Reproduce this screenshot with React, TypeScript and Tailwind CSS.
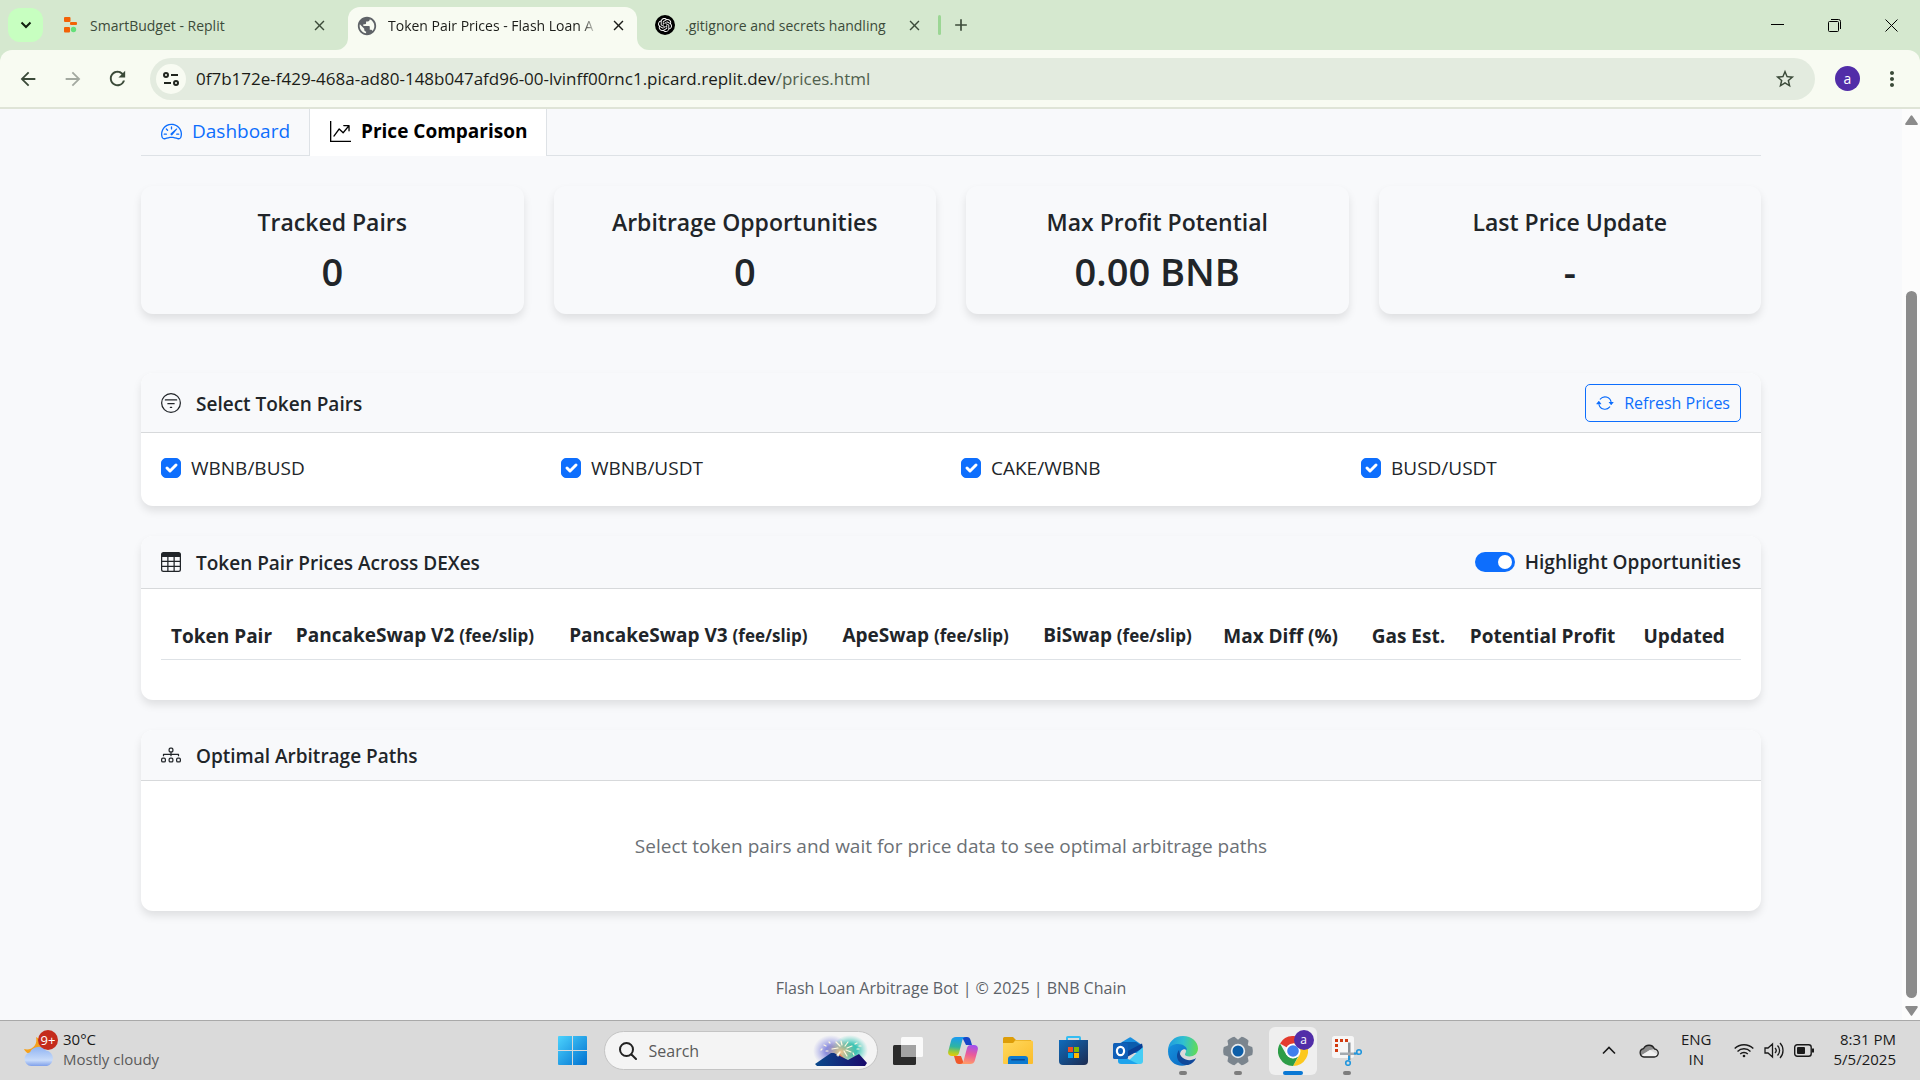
import React, { useState } from "react";
import {
  BsSpeedometer2,
  BsGraphUpArrow,
  BsFilterCircle,
  BsTable,
  BsDiagram3,
  BsArrowRepeat,
} from "react-icons/bs";
import { SiOpenai } from "react-icons/si";
import {
  MdArrowBack,
  MdArrowForward,
  MdRefresh,
  MdStarBorder,
  MdMoreVert,
  MdPublic,
  MdClose,
  MdAdd,
} from "react-icons/md";

const FONT = "font-['Open_Sans','Noto_Sans',sans-serif]";

function TabStrip() {
  return (
    <div className="flex h-[50px] items-stretch bg-[#d5e8cf] text-[14px] text-[#3c4b3a]">
      <div className="flex w-[348px] items-center pl-2 pr-5">
        <button
          aria-label="Search tabs"
          className="flex h-[34px] w-[35px] items-center justify-center rounded-xl bg-[#c7ffc0] text-[#10200e]"
        >
          <svg viewBox="0 0 12 8" className="h-2 w-3" fill="none" stroke="currentColor" strokeWidth="2">
            <path d="M1.5 1.5 6 6l4.500-4.500" />
          </svg>
        </button>
        <svg viewBox="0 0 13 16" className="ml-[21px] h-4 w-[13px]">
          <rect width="6.500" height="5" rx="1" fill="#f26207" />
          <rect x="6" y="5" width="7" height="3" rx="1" fill="#f26207" />
          <rect y="10" width="6" height="5.500" rx="1" fill="#f26207" />
          <circle cx="9.500" cy="12.500" r="2.700" fill="#64e07a" />
        </svg>
        <span className="ml-[13px] grow">SmartBudget - Replit</span>
        <button aria-label="Close SmartBudget tab">
          <MdClose className="size-[17px]" />
        </button>
      </div>
      <div className="flex w-[289px] items-end">
        <div className="relative flex h-[43px] w-full items-center rounded-t-xl bg-[#f8fbf2] pb-1.5 pl-2 pr-2.5 text-[#1b1c18]">
          <svg viewBox="0 0 12 12" className="absolute -left-3 bottom-0 size-3" fill="#f8fbf2">
            <path d="M12 0v12H0A12 12 0 0 0 12 0z" />
          </svg>
          <svg viewBox="0 0 12 12" className="absolute -right-3 bottom-0 size-3" fill="#f8fbf2">
            <path d="M0 0v12h12A12 12 0 0 1 0 0z" />
          </svg>
          <MdPublic className="size-[22px] shrink-0 text-[#5f6368]" />
          <span className="ml-2.5 w-[209px] overflow-hidden whitespace-nowrap [mask-image:linear-gradient(to_right,black_93%,transparent)]">
            Token Pair Prices - Flash Loan A
          </span>
          <button aria-label="Close Token Pair Prices tab" className="ml-auto">
            <MdClose className="size-[17px]" />
          </button>
        </div>
      </div>
      <div className="flex items-center pl-[18px]">
        <span className="flex size-5 items-center justify-center rounded-full bg-black text-white">
          <SiOpenai className="size-3.5" />
        </span>
        <span className="ml-2.5 w-[221px] whitespace-nowrap">.gitignore and secrets handling</span>
        <button aria-label="Close gitignore tab">
          <MdClose className="size-[17px]" />
        </button>
        <span className="ml-[15px] h-5 w-[3px] rounded bg-[#9bd694]" />
        <button aria-label="New tab" className="ml-2.5">
          <MdAdd className="size-5" />
        </button>
      </div>
      <div className="ml-auto flex items-center gap-11 pr-[22px] text-black">
        <button aria-label="Minimize">
          <svg viewBox="0 0 13 13" className="size-[13px]" stroke="currentColor">
            <path d="M0 5.500h13" />
          </svg>
        </button>
        <button aria-label="Restore">
          <svg viewBox="0 0 13 13" className="size-[13px]" fill="none" stroke="currentColor">
            <path d="M3 .5h7.500a2 2 0 0 1 2 2V10" />
            <rect x=".5" y="2.500" width="10" height="10" rx="1" />
          </svg>
        </button>
        <button aria-label="Close window">
          <svg viewBox="0 0 13 13" className="size-[13px]" stroke="currentColor">
            <path d="m.5.5 12 12m0-12-12 12" />
          </svg>
        </button>
      </div>
    </div>
  );
}

function Toolbar() {
  return (
    <div className="bg-[#d5e8cf]">
      <div className="flex h-[59px] items-center rounded-t-xl border-b-2 border-[#dfe4d7] bg-[#f8fbf2] pl-[17px] pr-4 text-[#3b4a39]">
        <button aria-label="Back">
          <MdArrowBack className="size-[22px]" />
        </button>
        <button aria-label="Forward" className="ml-[23px] text-[#a3a9a0]">
          <MdArrowForward className="size-[22px]" />
        </button>
        <button aria-label="Reload" className="ml-[22px]">
          <MdRefresh className="size-[23px]" />
        </button>
        <div className="ml-[21px] flex h-[42px] grow items-center rounded-full bg-[#e3ebdf] pl-1.5 pr-[19px]">
          <button
            aria-label="Site information"
            className="flex size-[30px] items-center justify-center rounded-full bg-[#f8fbf2] text-[#20251e]"
          >
            <svg viewBox="0 0 16 14" className="h-3.5 w-4" fill="none" stroke="currentColor" strokeWidth="2">
              <circle cx="3" cy="3" r="2" />
              <path d="M8 3h7M1 11h7" />
              <circle cx="13" cy="11" r="2" />
            </svg>
          </button>
          <span className="ml-2.5 grow text-[17px] text-[#1b1c18]">
            0f7b172e-f429-468a-ad80-148b047afd96-00-lvinff00rnc1.picard.replit.dev
            <span className="text-[#50604d]">/prices.html</span>
          </span>
          <button aria-label="Bookmark">
            <MdStarBorder className="size-[22px]" />
          </button>
        </div>
        <button
          aria-label="Profile"
          className="ml-5 flex size-[25px] items-center justify-center rounded-full bg-[#512da8] text-sm text-white"
        >
          a
        </button>
        <button aria-label="Menu" className="ml-5">
          <MdMoreVert className="size-6" />
        </button>
      </div>
    </div>
  );
}

const STATS = [
  ["Tracked Pairs", "0"],
  ["Arbitrage Opportunities", "0"],
  ["Max Profit Potential", "0.00 BNB"],
  ["Last Price Update", "-"],
];

const PAIRS = ["WBNB/BUSD", "WBNB/USDT", "CAKE/WBNB", "BUSD/USDT"];

const CARD = "overflow-hidden rounded-xl shadow-[0_5px_8px_rgba(0,0,0,0.1)]";
const CARD_HEADER = "flex items-center border-b border-[#d7d9db] bg-[#f8f9fb] px-5";
const CARD_TITLE = "ml-[15px] grow pt-0.5 font-semibold";

function PairCheckbox({ label }: { label: string }) {
  const [on, setOn] = useState(true);
  return (
    <label className="flex items-center gap-2.5">
      <span className="relative flex size-5">
        <input
          type="checkbox"
          checked={on}
          onChange={() => setOn(!on)}
          className="size-5 appearance-none rounded-[5px] border border-[#dee2e6] bg-white checked:border-[#0d6efd] checked:bg-[#0d6efd]"
        />
        {on && (
          <svg
            viewBox="0 0 20 20"
            className="pointer-events-none absolute inset-0 size-5"
            fill="none"
            stroke="white"
            strokeWidth="3"
            strokeLinecap="round"
            strokeLinejoin="round"
          >
            <path d="m6 10 3 3 6-6" />
          </svg>
        )}
      </span>
      {label}
    </label>
  );
}

function PriceTable() {
  const fee = <small className="text-[17px]">(fee/slip)</small>;
  return (
    <table className="w-full table-fixed text-left">
      <thead className="whitespace-nowrap">
        <tr className="border-b border-[#dee2e6] [&>th]:px-2.5 [&>th]:pt-[11px] [&>th]:pb-2 [&>th]:text-[19px] [&>th]:leading-[30px] [&>th]:font-bold">
          <th className="w-[7.9%]">Token Pair</th>
          <th className="w-[17.3%]">PancakeSwap V2 {fee}</th>
          <th className="w-[17.3%]">PancakeSwap V3 {fee}</th>
          <th className="w-[12.7%]">ApeSwap {fee}</th>
          <th className="w-[11.4%]">BiSwap {fee}</th>
          <th className="w-[9.4%]">Max Diff (%)</th>
          <th className="w-[6.2%]">Gas Est.</th>
          <th className="w-[11%]">Potential Profit</th>
          <th>Updated</th>
        </tr>
      </thead>
      <tbody />
    </table>
  );
}

function Page() {
  const [highlight, setHighlight] = useState(true);
  return (
    <div className="flex grow bg-[#f8f9fb] text-[#212529]">
      <main className="flex min-w-0 grow flex-col px-[141px] text-[19px] leading-[30px]">
        <nav className="flex h-[47px] border-b border-[#dee2e6]">
          <a href="#dashboard" className="flex w-[168px] items-center gap-2.5 pb-0.5 pl-5 text-[#0d6efd]">
            <BsSpeedometer2 className="size-[21px]" />
            Dashboard
          </a>
          <a
            href="#prices"
            className="-mb-px flex w-[238px] items-center gap-2.5 border-x border-[#dee2e6] bg-white pb-[3px] pl-5 font-bold text-black"
          >
            <BsGraphUpArrow className="size-[21px]" />
            Price Comparison
          </a>
        </nav>

        <section className="mt-[30px] grid grid-cols-4 gap-[30px] text-center">
          {STATS.map(([title, value]) => (
            <div key={title} className={`${CARD} px-5 pt-[21px] pb-[19px]`}>
              <h2 className="mb-2.5 text-[23px] leading-[30px] font-semibold">{title}</h2>
              <p className="text-[38px] leading-[48px] font-semibold">{value}</p>
            </div>
          ))}
        </section>

        <section className={`${CARD} mt-[59px] bg-white`}>
          <div className={`${CARD_HEADER} h-[60px]`}>
            <BsFilterCircle className="size-5" />
            <h3 className={CARD_TITLE}>Select Token Pairs</h3>
            <button className="flex h-[38px] items-center gap-2.5 rounded-[5px] border border-[#0d6efd] px-2.5 text-[16px] text-[#0d6efd]">
              <BsArrowRepeat className="size-[18px]" />
              Refresh Prices
            </button>
          </div>
          <div className="grid grid-cols-4 pt-5 pb-[23px] pl-5">
            {PAIRS.map((p) => (
              <PairCheckbox key={p} label={p} />
            ))}
          </div>
        </section>

        <section className={`${CARD} mt-[30px] bg-white`}>
          <div className={`${CARD_HEADER} h-[53px]`}>
            <BsTable className="size-5" />
            <h3 className={CARD_TITLE}>Token Pair Prices Across DEXes</h3>
            <label className="flex items-center gap-2.5 font-semibold">
              <input
                type="checkbox"
                role="switch"
                checked={highlight}
                onChange={() => setHighlight(!highlight)}
                className="flex h-5 w-10 appearance-none items-center rounded-full bg-gray-300 px-[3px] before:size-3.5 before:rounded-full before:bg-white checked:justify-end checked:bg-[#0d6efd]"
              />
              Highlight Opportunities
            </label>
          </div>
          <div className="px-5 pt-5 pb-10">
            <PriceTable />
          </div>
        </section>

        <section className={`${CARD} mt-[30px] bg-white`}>
          <div className={`${CARD_HEADER} h-[51px]`}>
            <BsDiagram3 className="size-5" />
            <h3 className={CARD_TITLE}>Optimal Arbitrage Paths</h3>
          </div>
          <p className="py-[50px] text-center text-[#6b7075]">
            Select token pairs and wait for price data to see optimal arbitrage paths
          </p>
        </section>

        <footer className="mt-[62px] text-center text-[16px] text-[#5c6268]">
          Flash Loan Arbitrage Bot | © 2025 | BNB Chain
        </footer>
      </main>
      <div className="flex w-[18px] shrink-0 flex-col items-center bg-[#fcfcfc] pt-1.5 pb-1">
        <svg viewBox="0 0 13 10" className="h-2.5 w-[13px]" fill="#8b8b8b">
          <path d="M5.700.8a1 1 0 0 1 1.600 0l5.200 7.500a1 1 0 0 1-.8 1.700H1.300a1 1 0 0 1-.8-1.700z" />
        </svg>
        <div className="grow-[166]" />
        <div className="w-[11px] grow-[707] rounded-full bg-[#8b8b8b]" />
        <svg viewBox="0 0 13 10" className="mt-2 h-2.5 w-[13px] rotate-180" fill="#8b8b8b">
          <path d="M5.700.8a1 1 0 0 1 1.600 0l5.200 7.500a1 1 0 0 1-.8 1.700H1.300a1 1 0 0 1-.8-1.700z" />
        </svg>
      </div>
    </div>
  );
}

function Weather() {
  return (
    <button className="flex items-center gap-2 text-left text-[15px] leading-5">
      <span className="relative block h-[38px] w-[31px]">
        <svg viewBox="0 0 31 38" className="absolute inset-0">
          <defs>
            <linearGradient id="cloud" x1="0" y1="0" x2="0" y2="1">
              <stop offset="0" stopColor="#8fb3f2" />
              <stop offset=".7" stopColor="#c9dcfa" />
              <stop offset="1" stopColor="#7fa0ea" />
            </linearGradient>
          </defs>
          <path d="M12 7c2 8-4 14-12 12 2 4 7 7 12 5 6-2 8-9 5-14z" fill="#f5a11c" />
          <path
            d="M7 36a7 7 0 0 1-1-13.800A9.500 9.500 0 0 1 22 20.500 7.900 7.900 0 0 1 23 36z"
            fill="url(#cloud)"
          />
        </svg>
        <span className="absolute top-0 left-3.5 flex size-5 items-center justify-center rounded-full bg-[#c42b1c] text-[13px] text-white">
          9+
        </span>
      </span>
      <span>
        <span className="block text-[#1a1a1a]">30°C</span>
        <span className="block text-[#5b5b5b]">Mostly cloudy</span>
      </span>
    </button>
  );
}

function StartIcon() {
  return (
    <svg viewBox="0 0 29 29" className="size-[29px]">
      <defs>
        <linearGradient id="win" x1="0" y1="0" x2="1" y2="1">
          <stop offset="0" stopColor="#4cd3fd" />
          <stop offset="1" stopColor="#0070d0" />
        </linearGradient>
      </defs>
      <path
        d="M1 0h13v14H0V1a1 1 0 0 1 1-1zm14 0h13a1 1 0 0 1 1 1v13H15zM0 15h14v14H1a1 1 0 0 1-1-1zm15 0h14v13a1 1 0 0 1-1 1H15z"
        fill="url(#win)"
      />
    </svg>
  );
}

function SearchArt() {
  return (
    <svg viewBox="0 0 56 31" className="h-[31px] w-14">
      <defs>
        <radialGradient id="sa1">
          <stop offset=".3" stopColor="#6f73d8" stopOpacity=".8" />
          <stop offset="1" stopColor="#8d90e6" stopOpacity="0" />
        </radialGradient>
        <radialGradient id="sa2">
          <stop offset=".4" stopColor="#2bbfae" stopOpacity=".9" />
          <stop offset="1" stopColor="#4fd0c0" stopOpacity="0" />
        </radialGradient>
        <radialGradient id="sa3">
          <stop offset="0" stopColor="#f6c38c" />
          <stop offset="1" stopColor="#c0a878" stopOpacity="0" />
        </radialGradient>
        <linearGradient id="sa4" x1="0" y1="0" x2="1" y2="0">
          <stop offset="0" stopColor="#0b4a8c" />
          <stop offset="1" stopColor="#1a0a6c" />
        </linearGradient>
      </defs>
      <ellipse cx="18" cy="16" rx="18" ry="16" fill="url(#sa1)" />
      <ellipse cx="37" cy="15" rx="18" ry="15" fill="url(#sa2)" />
      <ellipse cx="28" cy="17" rx="15" ry="12" fill="url(#sa3)" />
      <path d="m26 18 8 8 10-6-4 11H24z" fill="#f08050" />
      <path d="m2 29 16-11h3l14 7 11-6 8 9-2 3H4z" fill="url(#sa4)" />
      <g stroke="#fff8e0" strokeWidth="1.200" strokeLinecap="round">
        <path d="m27 11-4-4m6 3-1-4m4 5 3-4m-1 6 5-2m-6 4 5 2m-11 0-3 3m1-7-6 1m8 3-2 4m6-5 3 5M17 8l-1-1m-3 4-2-1m4 6h-2M42 9l2-1m0 6h2m-6 4 1 2m5-9h2M9 14l-1 1" />
      </g>
    </svg>
  );
}

function TaskViewIcon() {
  return (
    <svg viewBox="0 0 30 28" className="h-7 w-[30px]">
      <rect y="8" width="23" height="20" rx="1.500" fill="#2b2b2b" />
      <rect x="8" width="22" height="20" rx="1.500" fill="#fafafa" />
      <path d="M8 8h15v12H8z" fill="#a3a3a3" />
    </svg>
  );
}

function CopilotIcon() {
  return (
    <svg viewBox="0 0 30 28" className="h-7 w-[30px]">
      <defs>
        <linearGradient id="co1" x1=".3" y1="0" x2=".2" y2="1">
          <stop offset="0" stopColor="#1a9bf0" />
          <stop offset=".5" stopColor="#2fb5a0" />
          <stop offset=".8" stopColor="#a8cc30" />
          <stop offset="1" stopColor="#f0c800" />
        </linearGradient>
        <linearGradient id="co2" x1=".7" y1="0" x2=".5" y2="1">
          <stop offset="0" stopColor="#a050f0" />
          <stop offset=".5" stopColor="#ea5a9a" />
          <stop offset="1" stopColor="#ff9a6a" />
        </linearGradient>
      </defs>
      <path d="M14 0h5c2 0 3 1 3.500 3L24 8h-6z" fill="#1746c8" />
      <path d="M16 27h-5c-2 0-3-1-3.500-3L6 19h7z" fill="#f0582a" />
      <path
        d="M8 0h10c-2 0-3 1-3.600 3L11 16c-.6 2-1.600 3-4 3H4c-3 0-4.500-2-3.700-5L3 4c.8-3 2.400-4 5-4z"
        fill="url(#co1)"
      />
      <path
        d="M22 27H12c2 0 3-1 3.600-3L19 11c.6-2 1.600-3 4-3h3c3 0 4.500 2 3.700 5L27 23c-.8 3-2.400 4-5 4z"
        fill="url(#co2)"
      />
    </svg>
  );
}

function FolderIcon() {
  return (
    <svg viewBox="0 0 30 27" className="h-[27px] w-[30px]">
      <defs>
        <linearGradient id="fo" x1="0" y1="0" x2="1" y2="1">
          <stop offset="0" stopColor="#ffd95e" />
          <stop offset="1" stopColor="#fbbc2a" />
        </linearGradient>
      </defs>
      <path d="M0 1.500A1.500 1.500 0 0 1 1.500 0H9c1 0 1.500.4 2 1l2 2h15v8H0z" fill="#dd9d08" />
      <path d="M0 6h9c1 0 1.500-.3 2-1l1-1.500h16.500A1.500 1.500 0 0 1 30 5v21a1 1 0 0 1-1 1H1a1 1 0 0 1-1-1z" fill="url(#fo)" />
      <path d="M5 27v-5a3 3 0 0 1 3-3h14a3 3 0 0 1 3 3v5z" fill="#0d7ad0" />
      <rect x="8" y="22" width="14" height="1.500" rx=".7" fill="#0a4a94" />
    </svg>
  );
}

function StoreIcon() {
  return (
    <svg viewBox="0 0 29 29" className="size-[29px]">
      <defs>
        <linearGradient id="st" x1="0" y1="0" x2="1" y2="1">
          <stop offset="0" stopColor="#0f6cbd" />
          <stop offset="1" stopColor="#1d2b50" />
        </linearGradient>
      </defs>
      <path d="M8 6V1.800C8 1.200 8.300 1 8.800 1h11.400c.5 0 .8.200.8.800V6" fill="none" stroke="#35bdf2" strokeWidth="2" />
      <path d="M0 4h29v21a4 4 0 0 1-4 4H4a4 4 0 0 1-4-4z" fill="url(#st)" />
      <path d="M9 11h5v5H9z" fill="#f25022" />
      <path d="M15 11h5v5h-5z" fill="#7fba00" />
      <path d="M9 17h5v5H9z" fill="#00a4ef" />
      <path d="M15 17h5v5h-5z" fill="#ffb900" />
    </svg>
  );
}

function OutlookIcon() {
  return (
    <svg viewBox="0 0 30 27" className="h-[27px] w-[30px]">
      <path d="M4 8 16.500.5a1.500 1.500 0 0 1 1.500 0L29 8v8H4z" fill="#1a8fe0" />
      <path d="M9 5h14l6 4-13 9-9-3z" fill="#0b5cad" />
      <path d="m29 6.500-17 9 3 4L30 11z" fill="#0a3f94" />
      <path d="M30 10v14a3 3 0 0 1-3 3H12z" fill="#46cdf5" />
      <path d="m5 17 20 10H8a3 3 0 0 1-3-3z" fill="#1ea3ec" />
      <rect y="6" width="15" height="16" rx="1.500" fill="#0f5fb8" />
      <ellipse cx="7.500" cy="14" rx="3.600" ry="4.200" fill="none" stroke="white" strokeWidth="2.200" />
    </svg>
  );
}

function EdgeIcon() {
  return (
    <svg viewBox="0 0 30 30" className="size-[30px]">
      <defs>
        <linearGradient id="ed1" x1="0" y1=".4" x2="1" y2=".5">
          <stop offset="0" stopColor="#1f9be0" />
          <stop offset=".5" stopColor="#30c0d0" />
          <stop offset="1" stopColor="#62dc55" />
        </linearGradient>
        <linearGradient id="ed2" x1="0" y1="0" x2="1" y2="1">
          <stop offset="0" stopColor="#1592de" />
          <stop offset="1" stopColor="#0b66c0" />
        </linearGradient>
      </defs>
      <path d="M0 15C0 6 6.500 0 15 0c9 0 15 6 15 12.500 0 5-4 8-8.500 8-3 0-5-1-4.500-2.500 3-4-1-8-6-8-6 0-9.500 3-11 5z" fill="url(#ed1)" />
      <path d="M0 15C1 10 5 8 10 8c5 0 9 3 9 6-3-2-7 0-7 5 0 6 6 10 11 8-9 6-23 2-23-12z" fill="url(#ed2)" />
      <path d="M11 14c-5 7 0 15 9 15 4-1 7-4 8-7-5 4-16 3-17-8z" fill="#10489a" />
    </svg>
  );
}

function SettingsIcon() {
  return (
    <svg viewBox="0 0 30 30" className="size-[30px]">
      <g fill="#7b858e">
        <circle cx="15" cy="15" r="11.500" />
        {[0, 60, 120, 180, 240, 300].map((a) => (
          <path key={a} d="M9.500 5 11 .8c2.600-.8 5.400-.8 8 0L20.500 5z" transform={`rotate(${a + 30} 15 15)`} />
        ))}
      </g>
      <circle cx="15" cy="15" r="7.200" fill="#e8ecef" />
      <circle cx="15" cy="15" r="5.500" fill="#0c5ea8" />
    </svg>
  );
}

function ChromeIcon() {
  return (
    <svg viewBox="0 0 30 30" className="size-[30px]">
      <path d="M15 15 2 7.500A15 15 0 0 1 28 7.500H15z" fill="#e33b2e" />
      <path d="M28 7.500H15L21.500 19 15 30A15 15 0 0 0 28 7.500z" fill="#fcc81e" />
      <path d="M2 7.500 8.500 19 15 22.500l6-3.500L15 30A15 15 0 0 1 2 7.500z" fill="#2d9d47" />
      <circle cx="15" cy="15" r="7.500" fill="white" />
      <circle cx="15" cy="15" r="5.800" fill="#3f7fee" />
    </svg>
  );
}

function SnipIcon() {
  return (
    <svg viewBox="0 0 30 30" className="size-[30px]">
      <rect width="22" height="22" rx="2.500" fill="#f6f6f6" />
      <g fill="#d23b10">
        <path d="M3 3h3v3H3zM8 3h3v3H8zM13 3h3v3h-3zM3 8h3v3H3zM3 13h3v3H3z" />
      </g>
      <path d="M16 6.500h2.500V24H16z" fill="#8a9096" />
      <path d="M8 16.500h16V19H8z" fill="#a4aab0" />
      <path d="M17 20v4M22 17.500h3" stroke="#2196dd" strokeWidth="2" />
      <circle cx="16" cy="27" r="2.300" fill="none" stroke="#2196dd" strokeWidth="1.600" />
      <circle cx="27" cy="16" r="2.300" fill="none" stroke="#2196dd" strokeWidth="1.600" />
    </svg>
  );
}

function TaskButton({
  label,
  children,
  running = false,
}: {
  label: string;
  children: React.ReactNode;
  running?: boolean;
}) {
  return (
    <button aria-label={label} className="relative flex h-12 w-[55px] items-center justify-center">
      {children}
      {running && <span className="absolute bottom-0 h-1 w-2 rounded-full bg-[#7d7d7d]" />}
    </button>
  );
}

function Taskbar() {
  return (
    <div className="flex h-[60px] items-center border-t border-[#a9a9a9] bg-[#dadada] px-6 text-[#1a1a1a]">
      <div className="flex flex-1 items-center pb-1">
        <Weather />
      </div>
      <div className="ml-3 flex items-center">
        <button aria-label="Start" className="mr-[17px]">
          <StartIcon />
        </button>
        <label className="mr-[3px] flex h-[39px] w-[274px] items-center rounded-full border border-[#c4c4c4] bg-[#f4f4f4] pr-2 pl-3.5">
          <svg viewBox="0 0 18 18" className="size-[18px]" fill="none" stroke="#222" strokeWidth="2" strokeLinecap="round">
            <circle cx="7.500" cy="7.500" r="6.500" />
            <path d="m12.500 12.500 4.500 4.500" />
          </svg>
          <input
            type="text"
            aria-label="Search"
            placeholder="Search"
            className="ml-3 w-0 grow bg-transparent text-[16px] outline-none placeholder:text-[#5a5a5a]"
          />
          <SearchArt />
        </label>
        <TaskButton label="Task view"><TaskViewIcon /></TaskButton>
        <TaskButton label="Copilot"><CopilotIcon /></TaskButton>
        <TaskButton label="File Explorer"><FolderIcon /></TaskButton>
        <TaskButton label="Microsoft Store"><StoreIcon /></TaskButton>
        <TaskButton label="Outlook"><OutlookIcon /></TaskButton>
        <TaskButton label="Edge" running><EdgeIcon /></TaskButton>
        <TaskButton label="Settings" running><SettingsIcon /></TaskButton>
        <button
          aria-label="Chrome"
          className="relative mx-[3px] flex size-12 items-center justify-center rounded-md bg-[#efefef]"
        >
          <ChromeIcon />
          <span className="absolute top-[3px] right-[3px] flex size-5 items-center justify-center rounded-full bg-[#512da8] text-xs text-white">
            a
          </span>
          <span className="absolute bottom-0 h-1 w-5 rounded-full bg-[#0a78d4]" />
        </button>
        <TaskButton label="Snipping Tool" running><SnipIcon /></TaskButton>
      </div>
      <div className="flex flex-1 items-center justify-end text-[15px] leading-5">
        <button aria-label="Show hidden icons">
          <svg viewBox="0 0 14 9" className="h-[9px] w-3.5" fill="none" stroke="currentColor" strokeWidth="1.600">
            <path d="m1 7.500 6-6 6 6" />
          </svg>
        </button>
        <svg viewBox="0 0 20 15" className="ml-[23px] h-[15px] w-5" stroke="#222" strokeWidth="1.300">
          <path d="M4.500 5.700A6 6 0 0 1 15.500 6L11 7l-9 5.500C0 9 2 6 4.500 5.700z" fill="#8b8b8b" stroke="none" />
          <path d="m2 12.500 9-5.500 7.500 4.500L15 14H5z" fill="#f0f0f0" stroke="none" />
          <path d="M5 14a4.200 4.200 0 0 1-.5-8.300A6 6 0 0 1 15.500 6 4 4 0 0 1 15 14z" fill="none" />
        </svg>
        <span className="ml-[22px] pb-1 text-center">ENG<br />IN</span>
        <svg viewBox="0 0 20 15" className="ml-[22px] h-[15px] w-5" fill="none" stroke="currentColor" strokeWidth="1.400">
          <path d="M.7 5.600a13 13 0 0 1 18.600 0M3.500 8.400a9.200 9.200 0 0 1 13 0M6.200 11a5.400 5.400 0 0 1 7.600 0" />
          <circle cx="10" cy="13" r="1.300" fill="currentColor" stroke="none" />
        </svg>
        <svg viewBox="0 0 20 17" className="ml-2.5 h-[17px] w-5" fill="none" stroke="currentColor" strokeWidth="1.300">
          <path d="M1 6h3l4.500-4v13L4 11H1zM11 6c1.400 1.400 1.400 3.600 0 5M13.500 3.500c2.800 2.800 2.800 7.200 0 10M16 1c4 4 4 11 0 15" />
        </svg>
        <svg viewBox="0 0 20 13" className="ml-2.5 h-[13px] w-5" fill="none" stroke="currentColor" strokeWidth="1.400">
          <rect x=".7" y=".7" width="16.500" height="11.600" rx="2.500" />
          <rect x="3" y="3" width="8" height="7" rx="1" fill="currentColor" stroke="none" />
          <path d="M19 4.500v4" strokeWidth="2" />
        </svg>
        <span className="ml-5 pb-1 text-right whitespace-nowrap">8:31 PM<br />5/5/2025</span>
      </div>
    </div>
  );
}

export default function App() {
  return (
    <div className={`flex min-h-screen flex-col ${FONT}`}>
      <TabStrip />
      <Toolbar />
      <Page />
      <Taskbar />
    </div>
  );
}
